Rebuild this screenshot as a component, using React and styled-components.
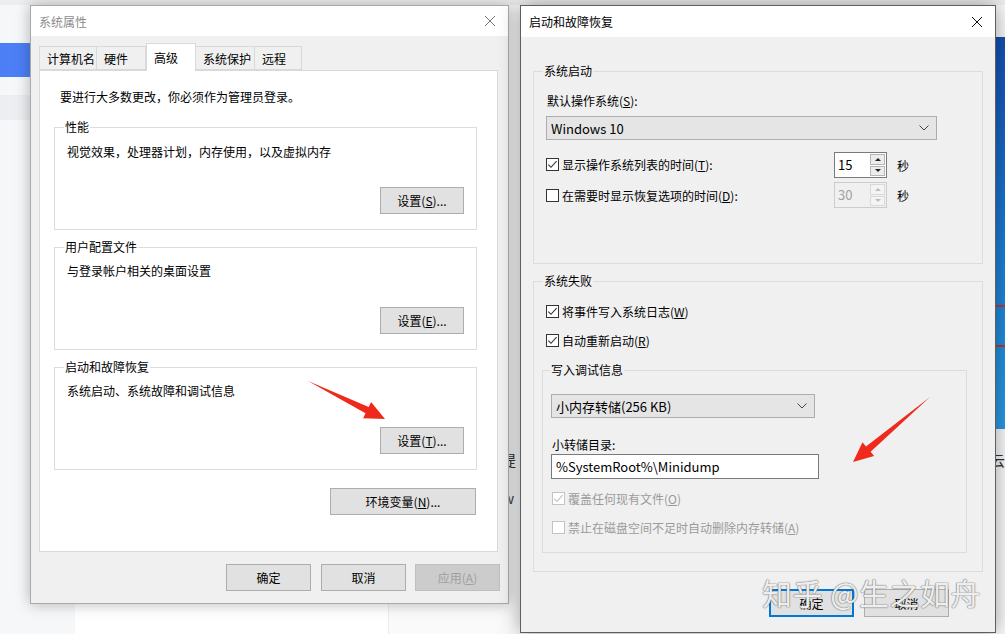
import React from 'react';
import styled, { createGlobalStyle } from 'styled-components';

const GlobalStyle = createGlobalStyle`
  html, body {
    margin: 0;
    padding: 0;
    overflow: hidden;
  }
  body {
    font-family: "Noto Sans CJK SC", "Noto Sans", sans-serif;
    font-size: 12px;
    color: #000;
  }
`;

const Desktop = styled.div`
  position: relative;
  width: 1005px;
  height: 634px;
  overflow: hidden;
  display: flex;
  flex-direction: column;
  background: #fff;
`;

// ---- page behind the dialogs ----
const TopStrip = styled.div`
  height: 5px;
  flex: none;
  background: #eeeeee;
`;

const BackRow = styled.div`
  flex: 1;
  display: flex;
`;

const Sidebar = styled.aside`
  width: 75px;
  flex: none;
  padding-top: 38px;
  box-sizing: border-box;
  background: #f6f7f9;
  display: flex;
  flex-direction: column;
  gap: 18px;
`;

const SideItem = styled.div`
  height: ${p => p.$h}px;
  background: ${p => (p.$active ? '#4c7ff6' : '#eceef2')};
`;

const MainCol = styled.main`
  width: 313px;
  flex: none;
  border-right: 1px solid #ececec;
  background: #fff;
`;

const ContentCol = styled.section`
  flex: 1;
  display: flex;
  flex-direction: column;
  padding-top: 32px;
  background: #fafafa;
`;

const Banner = styled.div`
  align-self: flex-end;
  width: 120px;
  height: 392px;
  box-sizing: border-box;
  padding-top: 268px;
  background-color: #1a6fcc;
  background-image: linear-gradient(180deg, #1450b4 0%, #1c7fd6 55%, #2a9be6 100%);
  display: flex;
  flex-direction: column;
  gap: 38px;
`;

const RedLine = styled.div`
  height: 2px;
  background: #c0392b;
`;

const BackText = styled.div`
  display: flex;
  justify-content: space-between;
  padding: 20px 0 0 112px;
  font-size: 15px;
  color: #333;
`;

const BackWord = styled.div`
  padding: 20px 0 0 114px;
  font-family: "Liberation Sans", sans-serif;
  font-size: 15px;
  color: #444;
`;

// ---- windows ----
const Window = styled.div`
  position: absolute;
  left: ${p => p.$left}px;
  top: ${p => p.$top}px;
  width: ${p => p.$width}px;
  height: ${p => p.$height}px;
  box-sizing: border-box;
  border: 1px solid ${p => (p.$active ? '#5e5e5e' : '#a9a9a9')};
  background: #f0f0f0;
  box-shadow: ${p => (p.$active ? '0 0 20px rgba(0, 0, 0, 0.38)' : '0 0 14px rgba(0, 0, 0, 0.28)')};
  display: flex;
  flex-direction: column;
`;

const TitleBar = styled.div`
  height: ${p => p.$h}px;
  flex: none;
  background: #fff;
  display: flex;
  align-items: center;
  justify-content: space-between;
  padding: 0 12px 0 8px;
`;

const Title = styled.span`
  font-size: 12px;
  color: ${p => (p.$active ? '#000' : '#8c8c8c')};
`;

const CloseIcon = ({ color }) => (
  <svg width="12" height="12" viewBox="0 0 12 12">
    <path d="M1 1 L11 11 M11 1 L1 11" stroke={color} strokeWidth="1" fill="none" />
  </svg>
);

// ---- tabs (left window) ----
const LeftBody = styled.div`
  flex: 1;
  display: flex;
  flex-direction: column;
  padding: 7px 10px 0 8px;
`;

const TabRow = styled.div`
  height: 28px;
  display: flex;
  align-items: flex-end;
  margin-bottom: -1px;
`;

const Tab = styled.div`
  width: ${p => p.$w}px;
  height: ${p => (p.$selected ? 28 : 24)}px;
  margin-bottom: ${p => (p.$selected ? 0 : 1)}px;
  box-sizing: border-box;
  padding-left: 7px;
  border: 1px solid #d9d9d9;
  border-bottom: ${p => (p.$selected ? 'none' : '1px solid #d9d9d9')};
  border-left-width: ${p => (p.$first || p.$selected ? 1 : 0)}px;
  background: ${p => (p.$selected ? '#fff' : '#f0f0f0')};
  display: flex;
  align-items: center;
  position: relative;
  z-index: ${p => (p.$selected ? 1 : 0)};
  font-size: 12px;
`;

const TabPanel = styled.div`
  flex: 1;
  background: #fff;
  border: 1px solid #d9d9d9;
  padding: 18px 20px 0 14px;
  display: flex;
  flex-direction: column;
`;

const Notice = styled.div`
  margin-left: 6px;
  line-height: 16px;
`;

const Group = styled.fieldset`
  margin: ${p => p.$mt || 0}px 0 0 ${p => p.$ml || 0}px;
  padding: 0 ${p => p.$pr ?? 12}px ${p => p.$pb}px ${p => p.$pl ?? 12}px;
  border: 1px solid #dcdcdc;
  min-inline-size: 0;
  display: flex;
  flex-direction: column;
`;

const Legend = styled.legend`
  padding: 0 1px;
  margin-left: -3px;
  font-size: 12px;
  line-height: 16px;
`;

const Desc = styled.div`
  margin-top: ${p => p.$mt}px;
  line-height: 16px;
`;

const ButtonRow = styled.div`
  display: flex;
  justify-content: flex-end;
  gap: ${p => p.$gap || 10}px;
  margin-top: ${p => p.$mt || 0}px;
  padding: ${p => p.$pad || '0'};
`;

const Button = styled.div`
  width: ${p => p.$w || 84}px;
  height: ${p => p.$h || 27}px;
  box-sizing: border-box;
  border: 1px solid ${p => (p.$default ? '#0078d7' : p.$disabled ? '#bfbfbf' : '#adadad')};
  box-shadow: ${p => (p.$default ? 'inset 0 0 0 1px #0078d7' : 'none')};
  background: ${p => (p.$disabled ? '#cccccc' : '#e1e1e1')};
  color: ${p => (p.$disabled ? '#a0a0a0' : '#000')};
  display: flex;
  align-items: center;
  justify-content: center;
  font-size: 12px;
`;

const Footer = styled.div`
  flex: none;
  display: flex;
  justify-content: flex-end;
  gap: 9px;
  padding: 12px 8px 12px 0;
`;

// ---- right window ----
const RightBody = styled.div`
  flex: 1;
  display: flex;
  flex-direction: column;
  padding: 26px 12px 0 12px;
`;

const FieldLabel = styled.div`
  margin: ${p => p.$mt}px 0 0 1px;
  line-height: 16px;
`;

const SelectBox = styled.div`
  width: ${p => p.$w}px;
  height: 24px;
  margin-top: ${p => p.$mt}px;
  box-sizing: border-box;
  border: 1px solid #adadad;
  background: #e5e5e5;
  display: flex;
  align-items: center;
  justify-content: space-between;
  padding: 0 7px 0 4px;
  font-size: 13px;
`;

const Chevron = () => (
  <svg width="10" height="6" viewBox="0 0 10 6">
    <polyline points="0.5,0.5 5,5 9.5,0.5" fill="none" stroke="#444" strokeWidth="1" />
  </svg>
);

const TimeRow = styled.div`
  display: grid;
  grid-template-columns: 278px 53px auto;
  column-gap: 10px;
  align-items: center;
  margin-top: ${p => p.$mt}px;
`;

const CheckRow = styled.div`
  display: flex;
  align-items: center;
  gap: 3px;
  height: 20px;
  margin: ${p => p.$mt || 0}px 0 0 ${p => p.$ml || 0}px;
  color: ${p => (p.$disabled ? '#9b9b9b' : '#000')};
`;

const Box = styled.span`
  width: 13px;
  height: 13px;
  flex: none;
  box-sizing: border-box;
  border: 1px solid ${p => (p.$disabled ? '#c4c4c4' : '#333')};
  background: #fff;
  display: inline-flex;
  align-items: center;
  justify-content: center;
`;

const Checkbox = ({ checked, disabled }) => (
  <Box $disabled={disabled}>
    {checked && (
      <svg width="11" height="11" viewBox="0 0 11 11">
        <polyline points="1.3,5.6 4,8.3 9.6,2.2" fill="none" stroke={disabled ? '#bdbdbd' : '#333'} strokeWidth="1.1" />
      </svg>
    )}
  </Box>
);

const Spin = styled.div`
  height: 26px;
  box-sizing: border-box;
  border: 1px solid ${p => (p.$disabled ? '#cccccc' : '#7a7a7a')};
  background: ${p => (p.$disabled ? '#f0f0f0' : '#fff')};
  display: flex;
`;

const SpinValue = styled.span`
  flex: 1;
  padding-left: 3px;
  line-height: 24px;
  font-size: 13px;
  color: ${p => (p.$disabled ? '#a0a0a0' : '#000')};
`;

const SpinButtons = styled.div`
  width: 16px;
  display: flex;
  flex-direction: column;
  gap: 1px;
  padding: 1px 1px 1px 0;
  box-sizing: border-box;
`;

const SpinBtn = styled.div`
  flex: 1;
  box-sizing: border-box;
  border: 1px solid ${p => (p.$disabled ? '#d9d9d9' : '#b5b5b5')};
  background: ${p => (p.$disabled ? '#f4f4f4' : '#ececec')};
  display: flex;
  align-items: center;
  justify-content: center;
  &::after {
    content: '';
    border-left: 3px solid transparent;
    border-right: 3px solid transparent;
    ${p => (p.$up ? 'border-bottom' : 'border-top')}: 3px solid ${p => (p.$disabled ? '#bdbdbd' : '#222')};
  }
`;

const Seconds = styled.span`
  font-size: 12px;
`;

const TextInput = styled.div`
  width: 268px;
  height: 25px;
  margin-top: 1px;
  box-sizing: border-box;
  border: 1px solid #7a7a7a;
  background: #fff;
  padding-left: 4px;
  line-height: 23px;
  font-size: 13px;
`;

// ---- overlays ----
const Overlay = styled.svg`
  position: absolute;
  left: 0;
  top: 0;
  pointer-events: none;
`;

const Watermark = styled.div`
  position: absolute;
  left: 762px;
  top: 572px;
  font-size: 30px;
  line-height: 40px;
  letter-spacing: 0.5px;
  color: rgba(255, 255, 255, 0.9);
  text-shadow: 0 0 1px #777, 0 0 1px #777, 0 0 2px rgba(0, 0, 0, 0.25);
  white-space: nowrap;
`;

const tabs = [
  { label: '计算机名', w: 58 },
  { label: '硬件', w: 49 },
  { label: '高级', w: 50, selected: true },
  { label: '系统保护', w: 59 },
  { label: '远程', w: 47 },
];

const groups = [
  { legend: '性能', desc: '视觉效果，处理器计划，内存使用，以及虚拟内存', btn: 'S' },
  { legend: '用户配置文件', desc: '与登录帐户相关的桌面设置', btn: 'E' },
  { legend: '启动和故障恢复', desc: '系统启动、系统故障和调试信息', btn: 'T' },
];

const SpinField = ({ value, disabled }) => (
  <Spin $disabled={disabled}>
    <SpinValue $disabled={disabled}>{value}</SpinValue>
    <SpinButtons>
      <SpinBtn $up $disabled={disabled} />
      <SpinBtn $disabled={disabled} />
    </SpinButtons>
  </Spin>
);

const App = () => {
  return (
    <>
      <GlobalStyle />
      <Desktop>
        <TopStrip />
        <BackRow>
          <Sidebar>
            <SideItem $h={34} $active />
            <SideItem $h={25} />
          </Sidebar>
          <MainCol />
          <ContentCol>
            <Banner>
              <RedLine />
              <RedLine />
            </Banner>
            <BackText>
              <span>提</span>
              <span>云</span>
            </BackText>
            <BackWord>w</BackWord>
          </ContentCol>
        </BackRow>

        {/* 系统属性 */}
        <Window $left={30} $top={5} $width={479} $height={599}>
          <TitleBar $h={30}>
            <Title>系统属性</Title>
            <CloseIcon color="#777" />
          </TitleBar>
          <LeftBody>
            <TabRow>
              {tabs.map((t, i) => (
                <Tab key={t.label} $w={t.w} $selected={t.selected} $first={i === 0}>
                  {t.label}
                </Tab>
              ))}
            </TabRow>
            <TabPanel>
              <Notice>要进行大多数更改，你必须作为管理员登录。</Notice>
              {groups.map((g, i) => (
                <Group key={g.legend} $mt={i === 0 ? 14 : 9} $pb={15}>
                  <Legend>{g.legend}</Legend>
                  <Desc $mt={i === 0 ? 9 : 8}>{g.desc}</Desc>
                  <ButtonRow $mt={i === 0 ? 27 : 28}>
                    <Button $w={84}>
                      设置(<u>{g.btn}</u>)...
                    </Button>
                  </ButtonRow>
                </Group>
              ))}
              <ButtonRow $mt={18} $pad="0 1px 0 0">
                <Button $w={146}>
                  环境变量(<u>N</u>)...
                </Button>
              </ButtonRow>
            </TabPanel>
          </LeftBody>
          <Footer>
            <Button $w={85} style={{ marginRight: 1 }}>确定</Button>
            <Button $w={85}>取消</Button>
            <Button $w={85} $disabled>
              应用(<u>A</u>)
            </Button>
          </Footer>
        </Window>

        {/* 启动和故障恢复 */}
        <Window $left={520} $top={5} $width={476} $height={628} $active>
          <TitleBar $h={31}>
            <Title $active>启动和故障恢复</Title>
            <CloseIcon color="#111" />
          </TitleBar>
          <RightBody>
            <Group $pb={55}>
              <Legend>系统启动</Legend>
              <FieldLabel $mt={14}>
                默认操作系统(<u>S</u>):
              </FieldLabel>
              <SelectBox $w={391} $mt={7}>
                <span>Windows 10</span>
                <Chevron />
              </SelectBox>
              <TimeRow $mt={12}>
                <CheckRow style={{ marginTop: -2 }}>
                  <Checkbox checked />
                  <span>
                    显示操作系统列表的时间(<u>T</u>):
                  </span>
                </CheckRow>
                <SpinField value="15" />
                <Seconds>秒</Seconds>
              </TimeRow>
              <TimeRow $mt={4}>
                <CheckRow>
                  <Checkbox />
                  <span>
                    在需要时显示恢复选项的时间(<u>D</u>):
                  </span>
                </CheckRow>
                <SpinField value="30" disabled />
                <Seconds>秒</Seconds>
              </TimeRow>
            </Group>

            <Group $mt={9} $pb={18} $pl={8} $pr={15}>
              <Legend style={{ marginLeft: 1 }}>系统失败</Legend>
              <CheckRow $mt={12} $ml={4}>
                <Checkbox checked />
                <span>
                  将事件写入系统日志(<u>W</u>)
                </span>
              </CheckRow>
              <CheckRow $mt={9} $ml={4}>
                <Checkbox checked />
                <span>
                  自动重新启动(<u>R</u>)
                </span>
              </CheckRow>
              <Group $mt={12} $pb={15} $pl={8}>
                <Legend style={{ marginLeft: -1 }}>写入调试信息</Legend>
                <SelectBox $w={264} $mt={16}>
                  <span>小内存转储(256 KB)</span>
                  <Chevron />
                </SelectBox>
                <FieldLabel $mt={19}>小转储目录:</FieldLabel>
                <TextInput>%SystemRoot%\Minidump</TextInput>
                <CheckRow $mt={9} $ml={1} $disabled>
                  <Checkbox checked disabled />
                  <span>
                    覆盖任何现有文件(<u>O</u>)
                  </span>
                </CheckRow>
                <CheckRow $mt={9} $ml={1} $disabled>
                  <Checkbox disabled />
                  <span>
                    禁止在磁盘空间不足时自动删除内存转储(<u>A</u>)
                  </span>
                </CheckRow>
              </Group>
            </Group>

            <ButtonRow $mt={17} $pad="0 34px 0 0">
              <Button $w={85} $h={28} $default>
                确定
              </Button>
              <Button $w={85} $h={28}>
                取消
              </Button>
            </ButtonRow>
          </RightBody>
        </Window>

        <Overlay width="1005" height="634" viewBox="0 0 1005 634">
          <polygon
            points="308,381 368.7,407 371.1,402 385,419 363.1,418.2 365.5,413.2"
            fill="#ef2a1d"
          />
          <polygon
            points="930,397 870.6,451.8 874.1,456 853,462 862.5,442.2 866,446.4"
            fill="#ef2a1d"
          />
        </Overlay>
        <Watermark>知乎 @生之如舟</Watermark>
      </Desktop>
    </>
  );
};

export default App;
